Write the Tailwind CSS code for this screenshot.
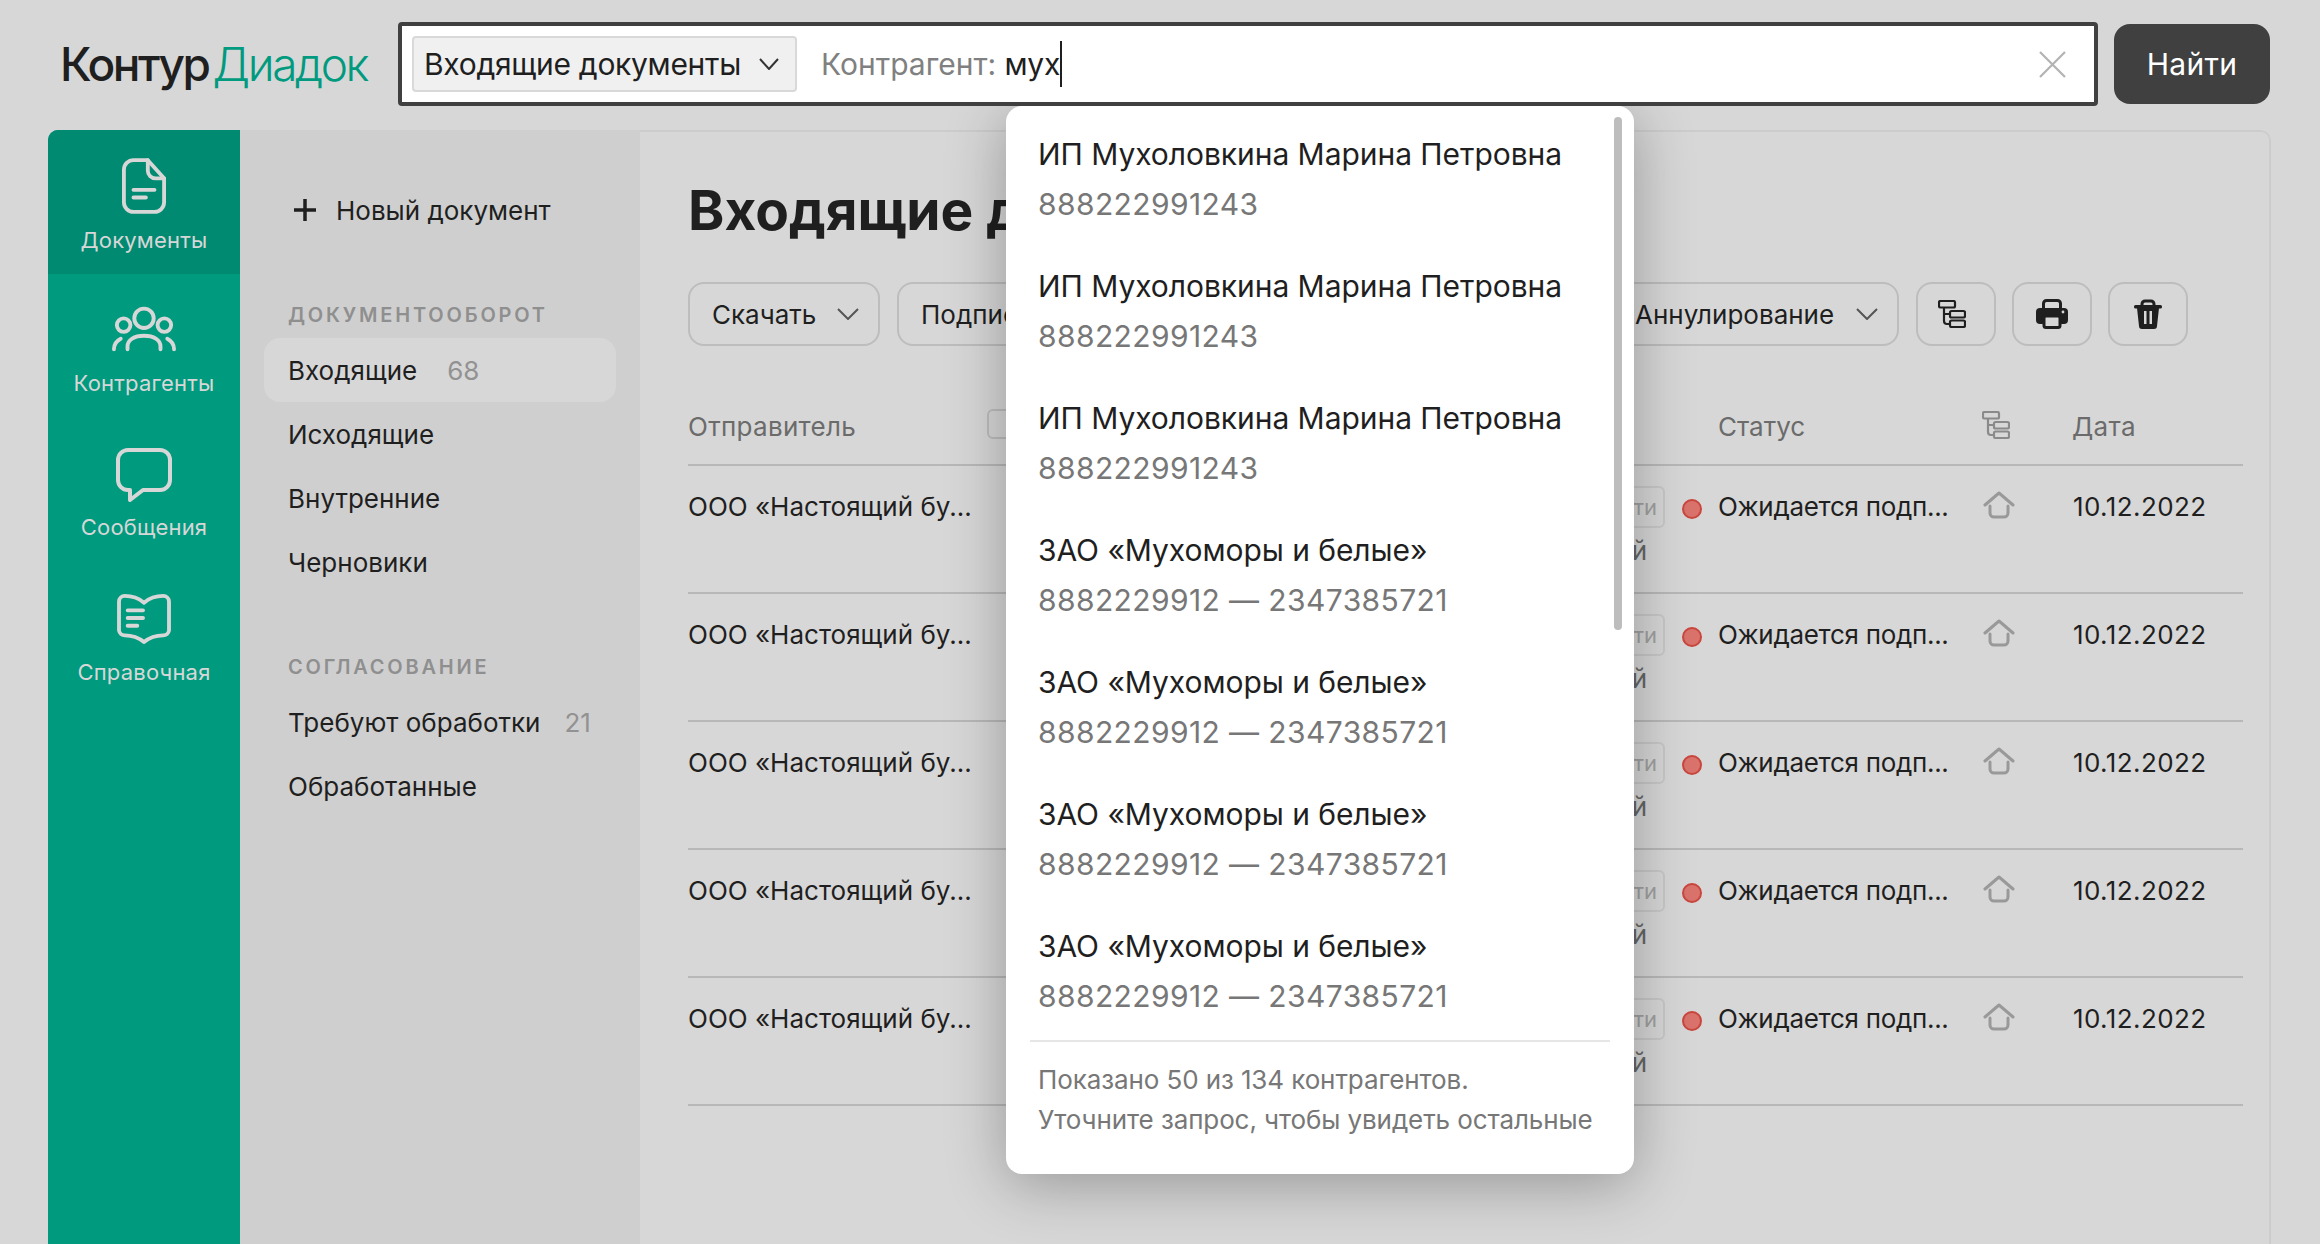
<!DOCTYPE html>
<html lang="ru">
<head>
  <meta charset="UTF-8" />
  <title>Контур Диадок</title>
  <script src="https://cdn.jsdelivr.net/npm/@tailwindcss/browser@4"></script>
</head>
<body class="bg-[#d7d7d7] h-[1244px] overflow-hidden font-['Inter','Liberation_Sans',sans-serif] text-[#1f1f1f]">
  <!-- header -->
  <header class="h-[130px] flex items-start">
    <div class="w-[398px] pl-[60px] pt-[40px] text-[46px] leading-[48px] tracking-[-2.4px] whitespace-nowrap flex gap-[4px]"><span class="font-medium">Контур</span><span class="text-[#009a7f] font-light">Диадок</span></div>
    <div class="relative z-20 mt-[22px] w-[1700px] h-[84px] border-4 border-[#404040] rounded-[4px] bg-white flex items-center pl-[10px] pr-[28px]">
      <div class="w-[385px] h-[56px] bg-[#f0f0f0] border-2 border-[#d9d9d9] rounded-[4px] flex items-center justify-between pl-[10px] pr-[16px] text-[30px]">
        <span class="whitespace-nowrap tracking-[-0.3px]">Входящие документы</span>
        <svg class="w-[20px] h-[12px]" viewBox="0 0 20 12" fill="none" stroke="#333" stroke-width="2"><path d="M1 1l9 10 9-10"/></svg>
      </div>
      <div class="ml-[24px] text-[30px] flex items-center flex-1 whitespace-nowrap">
        <span class="text-[#808080]">Контрагент:&nbsp;</span><span class="tracking-[-0.3px]">мух</span><span class="inline-block w-[2px] h-[46px] bg-[#1f1f1f]"></span>
      </div>
      <svg class="w-[27px] h-[27px]" viewBox="0 0 27 27" fill="none" stroke="#b3b3b3" stroke-width="2.2"><path d="M1 1l25 25M26 1L1 26"/></svg>
    </div>
    <button class="mt-[24px] ml-[16px] w-[156px] h-[80px] rounded-[16px] bg-[#404040] text-white text-[30px] tracking-[0.3px]">Найти</button>
  </header>

  <div class="ml-[48px] w-[2223px] h-[1114px] flex rounded-tl-[10px] rounded-tr-[10px] overflow-hidden">
    <!-- green rail -->
    <nav class="w-[192px] bg-[#009a7f] text-[#d7d7d7] text-[22px] tracking-[0.2px] flex flex-col items-center shrink-0">
      <div class="w-full h-[144px] bg-[#008a72] flex flex-col items-center pt-[28px]">
        <svg class="w-[44px] h-[56px]" viewBox="0 0 46 58" fill="none" stroke="#d7d7d7" stroke-width="4" stroke-linecap="round" stroke-linejoin="round"><path d="M12 2h15l17 19v25a10 10 0 0 1-10 10H12A10 10 0 0 1 2 46V12A10 10 0 0 1 12 2z"/><path d="M27 2v11a8 8 0 0 0 8 8h9M12 33h22M12 41h13"/></svg>
        <span class="mt-[11px] leading-[30px]">Документы</span>
      </div>
      <div class="w-full h-[144px] flex flex-col items-center pt-[32px]">
        <svg class="w-[64px] h-[46px]" viewBox="0 0 66 46" fill="none" stroke="#d7d7d7" stroke-width="4" stroke-linecap="round"><circle cx="33" cy="12" r="10"/><circle cx="12" cy="19" r="7"/><circle cx="54" cy="19" r="7"/><path d="M16 44v-3c0-7 7-11 17-11s17 4 17 11v3M2 44c0-6 3-9 7-11M64 44c0-6-3-9-7-11"/></svg>
        <span class="mt-[16px] leading-[30px]">Контрагенты</span>
      </div>
      <div class="w-full h-[144px] flex flex-col items-center pt-[30px]">
        <svg class="w-[56px] h-[54px]" viewBox="0 0 56 54" fill="none" stroke="#d7d7d7" stroke-width="4" stroke-linejoin="round"><path d="M12 2h32a10 10 0 0 1 10 10v20a10 10 0 0 1-10 10H27L14 52V42h-2A10 10 0 0 1 2 32V12A10 10 0 0 1 12 2z"/></svg>
        <span class="mt-[10px] leading-[30px]">Сообщения</span>
      </div>
      <div class="w-full h-[144px] flex flex-col items-center pt-[32px]">
        <svg class="w-[56px] h-[50px]" viewBox="0 0 56 52" fill="none" stroke="#d7d7d7" stroke-width="4" stroke-linecap="round" stroke-linejoin="round"><path d="M28 9C22 4 14 2 8 2a6 6 0 0 0-6 6v30a6 6 0 0 0 6 5c7 0 14 2 20 7 6-5 13-7 20-7a6 6 0 0 0 6-5V8a6 6 0 0 0-6-6c-6 0-14 2-20 7zM11 17h16M11 25h16M11 33h10"/></svg>
        <span class="mt-[13px] leading-[30px]">Справочная</span>
      </div>
    </nav>

    <!-- sidebar -->
    <aside class="w-[400px] bg-[#cfcfcf] shrink-0 pt-[62px] pl-[24px] pr-[24px] text-[26px]">
      <div class="flex items-center pl-[30px] h-[36px]">
        <svg class="w-[22px] h-[22px] mr-[20px]" viewBox="0 0 22 22" fill="none" stroke="#1f1f1f" stroke-width="3.5"><path d="M11 0v22M0 11h22"/></svg>
        <span>Новый документ</span>
      </div>
      <div class="mt-[73px] pl-[24px] text-[20px] leading-[28px] font-semibold tracking-[2.8px] text-[#8f8f8f]">ДОКУМЕНТООБОРОТ</div>
      <div class="mt-[9px] h-[64px] bg-[#d7d7d7] rounded-[16px] flex items-center pl-[24px]">Входящие<span class="ml-[30px] text-[#929292]">68</span></div>
      <div class="h-[64px] flex items-center pl-[24px]">Исходящие</div>
      <div class="h-[64px] flex items-center pl-[24px]">Внутренние</div>
      <div class="h-[64px] flex items-center pl-[24px]">Черновики</div>
      <div class="mt-[59px] pl-[24px] text-[20px] leading-[28px] font-semibold tracking-[2.8px] text-[#8f8f8f]">СОГЛАСОВАНИЕ</div>
      <div class="mt-[9px] h-[64px] flex items-center pl-[24px]">Требуют обработки<span class="ml-[24px] text-[#929292]">21</span></div>
      <div class="h-[64px] flex items-center pl-[24px]">Обработанные</div>
    </aside>

    <!-- main card -->
    <main class="flex-1 border-t-2 border-r-2 border-[#cccccc] rounded-tr-[10px] pl-[48px] pr-[26px]">
      <h1 class="mt-[43px] text-[55px] leading-[70px] font-bold whitespace-nowrap">Входящие документы</h1>
      <div class="mt-[37px] mr-[55px] flex items-center h-[64px] text-[26px]">
        <button class="w-[192px] h-[64px] border-2 border-[#bdbdbd] rounded-[16px] flex items-center justify-between pl-[22px] pr-[19px]">Скачать
          <svg class="w-[22px] h-[12px]" viewBox="0 0 22 12" fill="none" stroke="#555" stroke-width="2"><path d="M1 1l10 10L21 1"/></svg>
        </button>
        <button class="ml-[17px] w-[300px] h-[64px] border-2 border-[#bdbdbd] rounded-[16px] text-left px-[22px]">Подписать</button>
        <div class="flex-1"></div>
        <button class="w-[300px] h-[64px] border-2 border-[#bdbdbd] rounded-[16px] flex items-center justify-between pl-[34px] pr-[19px]">Аннулирование
          <svg class="w-[22px] h-[12px]" viewBox="0 0 22 12" fill="none" stroke="#555" stroke-width="2"><path d="M1 1l10 10L21 1"/></svg>
        </button>
        <button class="ml-[17px] w-[80px] h-[64px] border-2 border-[#bdbdbd] rounded-[16px] flex items-center justify-center">
          <svg class="w-[28px] h-[28px] mr-[8px]" viewBox="0 0 28 28" fill="none" stroke="#1f1f1f" stroke-width="2.2"><rect x="1" y="1" width="16" height="6.5" rx="1.5"/><rect x="12" y="11" width="15" height="6.5" rx="1.5"/><rect x="12" y="20.5" width="15" height="6.5" rx="1.5"/><path d="M6 7.5V21a3 3 0 0 0 3 3h3M6 14h6"/></svg>
        </button>
        <button class="ml-[16px] w-[80px] h-[64px] border-2 border-[#bdbdbd] rounded-[16px] flex items-center justify-center">
          <svg class="w-[32px] h-[30px]" viewBox="0 0 32 30"><rect x="7.5" y="1.5" width="17" height="12" rx="3" fill="#d7d7d7" stroke="#1f1f1f" stroke-width="3"/><rect x="0" y="9" width="32" height="16" rx="4" fill="#1f1f1f"/><rect x="8" y="17" width="16" height="11.5" rx="2" fill="#d7d7d7" stroke="#1f1f1f" stroke-width="3"/><circle cx="27" cy="13" r="1.4" fill="#d7d7d7"/></svg>
        </button>
        <button class="ml-[16px] w-[80px] h-[64px] border-2 border-[#bdbdbd] rounded-[16px] flex items-center justify-center">
          <svg class="w-[28px] h-[30px]" viewBox="0 0 28 30"><path d="M8 7V5a3 3 0 0 1 3-3h6a3 3 0 0 1 3 3v2" fill="none" stroke="#1f1f1f" stroke-width="3"/><rect x="0" y="6" width="28" height="3.5" rx="1.5" fill="#1f1f1f"/><path d="M3 9h22l-2 18a3 3 0 0 1-3 3H8a3 3 0 0 1-3-3z" fill="#1f1f1f"/><rect x="10" y="12" width="2.5" height="13" fill="#d7d7d7"/><rect x="15.5" y="12" width="2.5" height="13" fill="#d7d7d7"/></svg>
        </button>
      </div>

      <!-- table head -->
      <div class="mt-[50px] h-[70px] border-b-2 border-[#b8b8b8] flex text-[26px] text-[#6b6b6b] pt-[13px]">
        <span class="w-[299px] leading-[36px] tracking-[0.3px]">Отправитель</span>
        <span class="w-[731px]"><span class="block w-[40px] h-[30px] border-2 border-[#bdbdbd] rounded-[6px]"></span></span>
        <span class="w-[264px] leading-[36px]">Статус</span>
        <span class="w-[90px] pt-[2px]">
          <svg class="w-[28px] h-[28px]" viewBox="0 0 28 28" fill="none" stroke="#8a8a8a" stroke-width="2.2"><rect x="1" y="1" width="16" height="6.5" rx="1.5"/><rect x="12" y="11" width="15" height="6.5" rx="1.5"/><rect x="12" y="20.5" width="15" height="6.5" rx="1.5"/><path d="M6 7.5V21a3 3 0 0 0 3 3h3M6 14h6"/></svg>
        </span>
        <span class="leading-[36px] tracking-[0.3px]">Дата</span>
      </div>

      <!-- rows -->
      <div id="rows"></div>
    </main>
  </div>

  <!-- suggestions dropdown -->
  <div class="absolute left-[1006px] top-[106px] w-[628px] h-[1068px] bg-white rounded-[16px] shadow-[0_10px_60px_rgba(0,0,0,0.3)] z-10 pt-[4px]">
    <div class="absolute right-[12px] top-[11px] w-[8px] h-[513px] rounded-full bg-[#bdbdbd]"></div>
    <div id="items" class="h-[924px] pl-[32px] text-[30px]"></div>
    <div class="mx-[24px] mt-[6px] border-t-2 border-[#e6e6e6] pl-[8px] pt-[18px] text-[26px] leading-[40px] tracking-[-0.1px] text-[#777777] whitespace-nowrap">
      <div>Показано 50 из 134 контрагентов.</div>
      <div>Уточните запрос, чтобы увидеть остальные</div>
    </div>
  </div>

  <script>
    const items = [
      ["ИП Мухоловкина Марина Петровна", "888222991243"],
      ["ИП Мухоловкина Марина Петровна", "888222991243"],
      ["ИП Мухоловкина Марина Петровна", "888222991243"],
      ["ЗАО «Мухоморы и белые»", "8882229912 — 2347385721"],
      ["ЗАО «Мухоморы и белые»", "8882229912 — 2347385721"],
      ["ЗАО «Мухоморы и белые»", "8882229912 — 2347385721"],
      ["ЗАО «Мухоморы и белые»", "8882229912 — 2347385721"]
    ];
    document.getElementById("items").innerHTML = items.map(([name, inn]) => `
      <div class="h-[132px] pt-[20px]">
        <div class="leading-[48px] tracking-[-0.05px]">${name}</div>
        <div class="leading-[52px] tracking-[0.4px] text-[#777777]">${inn}</div>
      </div>`).join("");

    const row = `
      <div class="h-[128px] border-b-2 border-[#b8b8b8] flex text-[26px] pt-[23px]">
        <span class="w-[300px] leading-[36px] whitespace-nowrap">ООО «Настоящий бу...</span>
        <div class="w-[677px] flex flex-col items-end -mt-[3px]">
          <span class="w-[60px] h-[42px] border-2 border-[#c8c8c8] rounded-[6px] text-[22px] leading-[38px] text-[#a0a0a0] text-right pr-[6px]">ти</span>
          <span class="mt-[5px] pr-[18px] leading-[36px] text-[#666666]">й</span>
        </div>
        <span class="ml-[17px] w-[36px] pt-[10px]"><span class="block w-[20px] h-[20px] rounded-full bg-[#d9736b] border-2 border-[#c9463d]"></span></span>
        <span class="w-[265px] leading-[36px] tracking-[-0.3px] whitespace-nowrap">Ожидается подп...</span>
        <span class="w-[90px] pt-[2px]"><svg class="w-[32px] h-[28px]" viewBox="0 0 32 28" fill="none" stroke="#999999" stroke-width="3" stroke-linecap="round" stroke-linejoin="round"><path d="M2 14L16 2l14 12"/><path d="M7 15v7a4 4 0 0 0 4 4h10a4 4 0 0 0 4-4v-7"/></svg></span>
        <span class="leading-[36px] tracking-[0.4px]">10.12.2022</span>
      </div>`;
    document.getElementById("rows").innerHTML = row.repeat(5);
  </script>
</body>
</html>
